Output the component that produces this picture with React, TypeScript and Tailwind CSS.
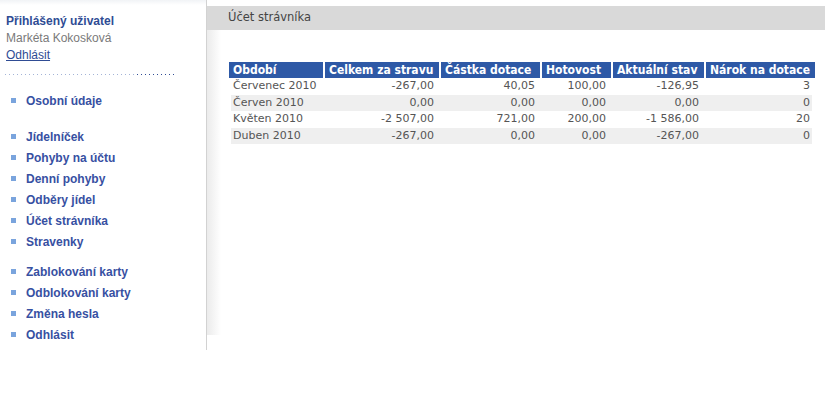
import React from 'react';

const ROWS = [
  ['Červenec 2010', '-267,00', '40,05', '100,00', '-126,95', '3'],
  ['Červen 2010', '0,00', '0,00', '0,00', '0,00', '0'],
  ['Květen 2010', '-2 507,00', '721,00', '200,00', '-1 586,00', '20'],
  ['Duben 2010', '-267,00', '0,00', '0,00', '-267,00', '0'],
];

const HEAD = ['Období', 'Celkem za stravu', 'Částka dotace', 'Hotovost', 'Aktuální stav', 'Nárok na dotace'];

const MENU = [
  ['Osobní údaje'],
  ['Jídelníček', 'Pohyby na účtu', 'Denní pohyby', 'Odběry jídel', 'Účet strávníka', 'Stravenky'],
  ['Zablokování karty', 'Odblokování karty', 'Změna hesla', 'Odhlásit'],
];

function MenuItem({ label }: { label: string }) {
  return (
    <div className="flex items-center h-[21px]">
      <span className="w-[5px] h-[5px] bg-[#7aa4dd] ml-[11px] mr-[10px]" />
      <span className="text-[12px] font-bold text-[#3750a2]">{label}</span>
    </div>
  );
}

export default function App() {
  return (
    <div
      className="flex w-[825px] h-[400px] bg-white"
      style={{ fontFamily: '"Liberation Sans", Arial, sans-serif' }}
    >
      {/* Sidebar */}
      <div className="w-[207px] h-[350px] shrink-0 border-r border-[#d2d2d2] bg-[linear-gradient(to_bottom,#f1f3f6,#ffffff_5px)]">
        <div className="pl-[6px] pt-[13px] text-[12px] leading-[17px]">
          <div className="font-bold text-[#2f4c94]">Přihlášený uživatel</div>
          <div className="text-[#7a7a7a]">Markéta Kokosková</div>
          <div className="text-[#2f4c94] underline">Odhlásit</div>
        </div>
        <div className="flex ml-[5px] mt-[10px] h-[1px]">
          <div className="w-[132px] h-[1px] bg-[linear-gradient(to_right,#a3b3d6_1px,transparent_1px)] bg-[length:4px_1px]" />
          <div className="w-[40px] h-[1px] bg-[linear-gradient(to_right,#2f4c94_1px,transparent_1px)] bg-[length:4px_1px]" />
        </div>
        <div className="mt-[15px] flex flex-col gap-[15px]">
          <div>
            {MENU[0].map((m) => (
              <MenuItem key={m} label={m} />
            ))}
          </div>
          <div>
            {MENU[1].map((m) => (
              <MenuItem key={m} label={m} />
            ))}
          </div>
        </div>
        <div className="mt-[9px]">
          {MENU[2].map((m) => (
            <MenuItem key={m} label={m} />
          ))}
        </div>
      </div>

      {/* Main */}
      <div className="flex-1 pt-[6px]" style={{ fontFamily: '"DejaVu Sans", Verdana, sans-serif' }}>
        <div className="h-[24px] bg-[#d9d9d9] flex items-center pl-[21px] text-[11.5px] text-[#444]">
          Účet strávníka
        </div>
        <div className="h-[305px] pt-[32px] pl-[22px] bg-[linear-gradient(to_right,#ebebeb,#ffffff_14px)]">
          <div className="w-[586px] text-[11px] leading-[16px]">
            <div
              className="grid grid-cols-[94px_116px_101px_71px_93px_111px] bg-[#2e59a6] text-white font-bold text-[12px]"
              style={{ fontFamily: '"DejaVu Sans Condensed", "DejaVu Sans", sans-serif' }}
            >
              {HEAD.map((h, i) => (
                <div
                  key={h}
                  className={
                    i === 0
                      ? 'pl-[4px] h-[16px] whitespace-nowrap overflow-hidden'
                      : 'pl-[4px] h-[16px] whitespace-nowrap overflow-hidden border-l-2 border-white'
                  }
                >
                  {h}
                </div>
              ))}
            </div>
            {ROWS.map((r, ri) => (
              <div
                key={r[0]}
                className={
                  ri % 2 === 1
                    ? 'grid grid-cols-[94px_116px_101px_71px_93px_111px] h-[16.5px] leading-[16.5px] bg-[#efefef] text-[#555] ml-[2px] mr-[3px]'
                    : 'grid grid-cols-[94px_116px_101px_71px_93px_111px] h-[16.5px] leading-[16.5px] text-[#555] ml-[2px] mr-[3px]'
                }
              >
                {r.map((c, ci) => (
                  <div key={ci} className={ci === 0 ? 'pl-[2px] whitespace-nowrap' : 'text-right pr-[7px] whitespace-nowrap'}>
                    {c}
                  </div>
                ))}
              </div>
            ))}
          </div>
        </div>
      </div>
    </div>
  );
}
